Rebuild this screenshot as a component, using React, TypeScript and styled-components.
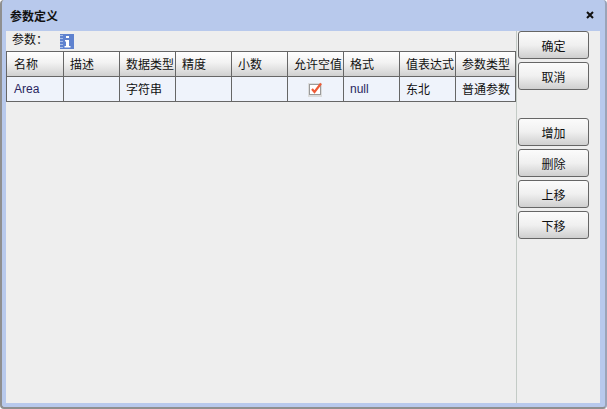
import React from "react";
import styled, { createGlobalStyle } from "styled-components";

const GlobalStyle = createGlobalStyle`
  html, body {
    margin: 0;
    padding: 0;
    background: #fff;
    font-family: "Noto Sans CJK SC", "Liberation Sans", sans-serif;
    font-size: 12px;
    color: #111;
  }
`;

const Win = styled.div`
  box-sizing: border-box;
  width: 607px;
  height: 409px;
  display: flex;
  flex-direction: column;
  background: #b8c9ec;
  border-radius: 4px;
  border-left: 2px solid #8f8f8f;
  border-bottom: 2px solid #8f8f8f;
  border-right: 2px solid #9aa4b8;
  padding: 0 5px 4px 4px;
`;

const TitleBar = styled.div`
  box-sizing: border-box;
  height: 31px;
  flex: none;
  display: flex;
  align-items: center;
  justify-content: space-between;
  padding: 0 6px 0 4px;
  line-height: 16px;
  font-size: 12px;
  font-weight: 700;
  color: #111;
`;

const CloseBtn = styled.svg`
  width: 8px;
  height: 8px;
  display: block;
  margin-bottom: 2px;
`;

const Body = styled.div`
  flex: 1;
  display: flex;
  background: #eeeeee;
  min-height: 0;
`;

const Main = styled.div`
  width: 510px;
  flex: none;
  display: flex;
  flex-direction: column;
  border-right: 1px solid #c3cbc6;
`;

const ParamRow = styled.div`
  height: 20px;
  flex: none;
  display: flex;
  align-items: flex-start;
  gap: 12px;
  padding-left: 6px;
  font-size: 12px;
  line-height: 16px;
`;

const InfoIcon = styled.svg`
  width: 14px;
  height: 15px;
  display: block;
  margin-top: 3px;
`;

const Grid = styled.table`
  border-collapse: separate;
  border-spacing: 0;
  table-layout: fixed;
  width: 510px;
  border-top: 1px solid #666;
  border-left: 1px solid #666;
`;

const cellBase = `
  box-sizing: border-box;
  height: 25px;
  padding: 0 0 0 6px;
  border-right: 1px solid #666;
  border-bottom: 1px solid #666;
  white-space: nowrap;
  overflow: hidden;
  font-size: 12px;
  line-height: 16px;
  text-align: left;
`;

const Th = styled.th`
  ${cellBase}
  font-weight: 400;
  background: linear-gradient(#ffffff, #f2f2f2 45%, #d0d0d0);
  &:first-child {
    padding-left: 7px;
  }
`;

const Td = styled.td<{ $latin?: boolean }>`
  ${cellBase}
  background: #eff3fb;
  font-family: ${(p) => (p.$latin ? '"Liberation Sans", sans-serif' : "inherit")};
  color: ${(p) => (p.$latin ? "#2a2560" : "#111")};
  &:first-child {
    padding-left: 7px;
  }
`;

const CheckCell = styled(Td)`
  padding: 0;
  text-align: center;
  line-height: 0;
`;

const CheckBox = styled.svg`
  display: inline-block;
  width: 15px;
  height: 15px;
  margin-right: 1px;
`;

const Side = styled.div`
  flex: 1;
  display: flex;
  flex-direction: column;
  gap: 3px;
  padding-left: 1px;
`;

const Btn = styled.button`
  box-sizing: border-box;
  width: 71px;
  height: 28px;
  padding: 2px 0 0;
  border: 1px solid #666;
  border-radius: 3px;
  background: linear-gradient(#fbfbfb, #f0f0f0 50%, #cfcfcf);
  font-family: inherit;
  font-size: 12px;
  line-height: 16px;
  color: #111;
`;

const Spacer = styled.div`
  height: 22px;
  flex: none;
`;

const columns = ["名称", "描述", "数据类型", "精度", "小数", "允许空值", "格式", "值表达式", "参数类型"];
const widths = [57, 56, 56, 56, 56, 56, 56, 56, 60];

export default function App() {
  return (
    <>
      <GlobalStyle />
      <Win>
        <TitleBar>
          <span>参数定义</span>
          <CloseBtn viewBox="0 0 8 8">
            <path d="M1 1 L7 7 M7 1 L1 7" stroke="#111" strokeWidth="2" />
          </CloseBtn>
        </TitleBar>
        <Body>
          <Main>
            <ParamRow>
              <span>参数：</span>
              <InfoIcon viewBox="0 0 14 15">
                <rect width="14" height="15" fill="#5f82cf" />
                <path d="M0 1.500h3M0 4.500h3M0 7.500h3M0 10.500h3M0 13.500h3" stroke="#a9bfe9" />
                <path d="M6 2h3v2H6zM5 6h4v6h1.500v1.500H4.500V12H6V7.500H5z" fill="#fff" />
              </InfoIcon>
            </ParamRow>
            <Grid>
              <colgroup>
                {widths.map((w, i) => (
                  <col key={i} style={{ width: w }} />
                ))}
              </colgroup>
              <thead>
                <tr>
                  {columns.map((c) => (
                    <Th key={c}>{c}</Th>
                  ))}
                </tr>
              </thead>
              <tbody>
                <tr>
                  <Td $latin>Area</Td>
                  <Td />
                  <Td>字符串</Td>
                  <Td />
                  <Td />
                  <CheckCell>
                    <CheckBox viewBox="0 0 15 15">
                      <rect x="0" y="1" width="14" height="14" fill="#dcdcdc" />
                      <rect x="1.500" y="2.500" width="11" height="10" fill="#fff" stroke="#9a9a9a" />
                      <path d="M4 7 L6.500 10 L13 1.500" fill="none" stroke="#ee5a36" strokeWidth="2.200" />
                    </CheckBox>
                  </CheckCell>
                  <Td $latin>null</Td>
                  <Td>东北</Td>
                  <Td>普通参数</Td>
                </tr>
              </tbody>
            </Grid>
          </Main>
          <Side>
            <Btn>确定</Btn>
            <Btn>取消</Btn>
            <Spacer />
            <Btn>增加</Btn>
            <Btn>删除</Btn>
            <Btn>上移</Btn>
            <Btn>下移</Btn>
          </Side>
        </Body>
      </Win>
    </>
  );
}
